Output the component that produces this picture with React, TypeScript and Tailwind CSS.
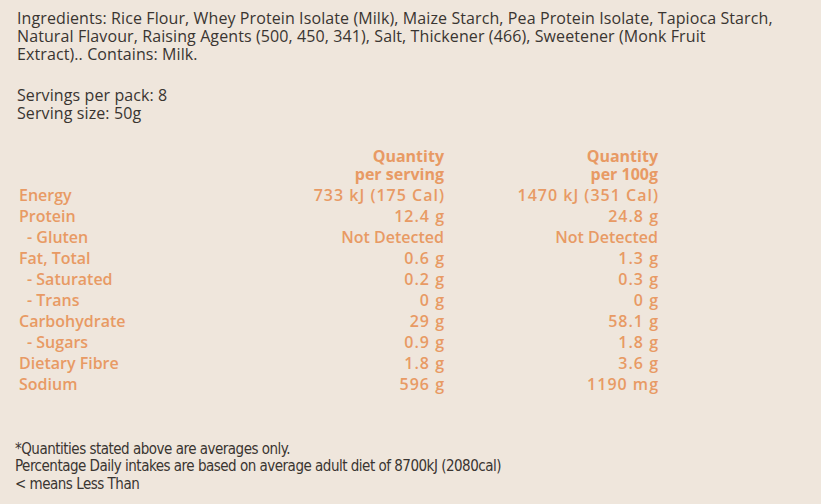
const rows: [string, string, string, boolean][] = [
  ["Energy", "733 kJ (175 Cal)", "1470 kJ (351 Cal)", false],
  ["Protein", "12.4 g", "24.8 g", false],
  ["- Gluten", "Not Detected", "Not Detected", true],
  ["Fat, Total", "0.6 g", "1.3 g", false],
  ["- Saturated", "0.2 g", "0.3 g", true],
  ["- Trans", "0 g", "0 g", true],
  ["Carbohydrate", "29 g", "58.1 g", false],
  ["- Sugars", "0.9 g", "1.8 g", true],
  ["Dietary Fibre", "1.8 g", "3.6 g", false],
  ["Sodium", "596 g", "1190 mg", false],
];

function Value({ text }: { text: string }) {
  const numeric = /\d/.test(text);
  return (
    <div className={numeric ? "text-right leading-[21px] tracking-[1px] -mr-[1px]" : "text-right leading-[21px]"}>
      {text}
    </div>
  );
}

export default function App() {
  return (
    <div className="w-[821px] h-[504px] overflow-hidden bg-[#efe6dc] text-[#3a3531] font-['Open_Sans','Noto_Sans',sans-serif]">
      <div className="pl-[17px] pt-[9px] text-[16px] leading-[18px] font-medium tracking-[0.1px]">
        <p className="w-[800px] whitespace-nowrap">
          Ingredients: Rice Flour, Whey Protein Isolate (Milk), Maize Starch, Pea Protein Isolate, Tapioca Starch,
          <br />
          Natural Flavour, Raising Agents (500, 450, 341), Salt, Thickener (466), Sweetener (Monk Fruit
          <br />
          Extract).. Contains: Milk.
        </p>
        <div className="mt-[23px]">
          <p>Servings per pack: 8</p>
          <p>Serving size: 50g</p>
        </div>
      </div>

      <div className="ml-[19px] mt-[25px] grid grid-cols-[205px_220px_214px] text-[16px] text-[#e89a64] font-semibold">
        <div />
        <div className="text-right font-bold leading-[18px]">
          Quantity
          <br />
          per serving
        </div>
        <div className="text-right font-bold leading-[18px]">
          Quantity
          <br />
          per 100g
        </div>
        <div className="col-span-3 h-[1.5px]" />
        {rows.map(([label, a, b, sub]) => (
          <div key={label} className="contents">
            <div className={sub ? "pl-[8px] leading-[21px]" : "leading-[21px]"}>{label}</div>
            <Value text={a} />
            <Value text={b} />
          </div>
        ))}
      </div>

      <div className="pl-[15px] mt-[46px] text-[15px] leading-[17.5px] tracking-[-0.5px] font-['DejaVu_Sans_Condensed','DejaVu_Sans',sans-serif] font-stretch-condensed">
        <p>*Quantities stated above are averages only.</p>
        <p>Percentage Daily intakes are based on average adult diet of 8700kJ (2080cal)</p>
        <p>&lt; means Less Than</p>
      </div>
    </div>
  );
}
